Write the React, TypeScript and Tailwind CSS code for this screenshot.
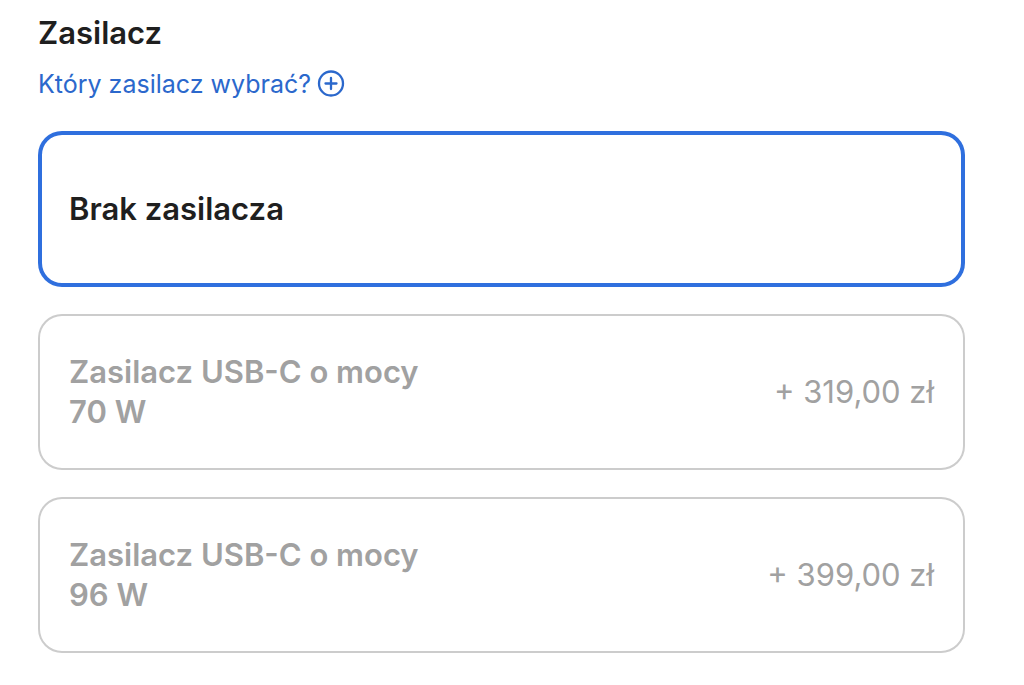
import React, { useState } from 'react';

interface AdapterOption {
  id: string;
  name: string;
  price?: string;
  disabled?: boolean;
}

const options: AdapterOption[] = [
  { id: 'none', name: 'Brak zasilacza' },
  { id: 'usb-c-70', name: 'Zasilacz USB-C o mocy 70\u00a0W', price: '+ 319,00 zł', disabled: true },
  { id: 'usb-c-96', name: 'Zasilacz USB-C o mocy 96\u00a0W', price: '+ 399,00 zł', disabled: true },
];

const PlusCircleIcon: React.FC = () => (
  <svg viewBox="0 0 28 28" className="w-7 h-7 shrink-0" fill="none" stroke="currentColor" strokeWidth="2.3" aria-hidden="true">
    <circle cx="14" cy="13.5" r="12" />
    <path d="M14 8v11M8.5 13.5h11" strokeLinecap="round" />
  </svg>
);

interface OptionCardProps {
  option: AdapterOption;
  checked: boolean;
  onSelect: (id: string) => void;
}

const OptionCard: React.FC<OptionCardProps> = ({ option, checked, onSelect }) => (
  <label
    htmlFor={option.id}
    className="relative flex items-center justify-between gap-8 min-h-[156px] px-[31px] rounded-3xl text-[31px] leading-10 text-[#1f1f1f] ring-2 ring-inset ring-[#cccccc] cursor-pointer has-checked:ring-4 has-checked:ring-[#2f6fde] has-disabled:text-[#a1a1a1] has-disabled:cursor-default"
  >
    <input
      type="radio"
      id={option.id}
      name="adapter"
      value={option.id}
      checked={checked}
      disabled={option.disabled}
      onChange={() => onSelect(option.id)}
      className="sr-only"
    />
    <span className="max-w-96 font-semibold">{option.name}</span>
    {option.price && <span className="shrink-0">{option.price}</span>}
  </label>
);

const App: React.FC = () => {
  const [selected, setSelected] = useState('none');

  return (
    <main className="min-h-screen bg-white pt-[13px] pb-7 pl-[38px] pr-[59px] font-[Inter,sans-serif]">
      <h2 id="adapter-heading" className="text-[31px] leading-10 font-semibold text-[#1f1f1f]">
        Zasilacz
      </h2>
      <a href="#adapter-help" className="mt-[11px] inline-flex items-center gap-1.5 text-[25px] leading-10 text-[#2b68cc]">
        Który zasilacz wybrać?
        <PlusCircleIcon />
      </a>
      <div role="radiogroup" aria-labelledby="adapter-heading" className="mt-[27px] flex flex-col gap-[27px]">
        {options.map((option) => (
          <OptionCard key={option.id} option={option} checked={selected === option.id} onSelect={setSelected} />
        ))}
      </div>
    </main>
  );
};

export default App;
